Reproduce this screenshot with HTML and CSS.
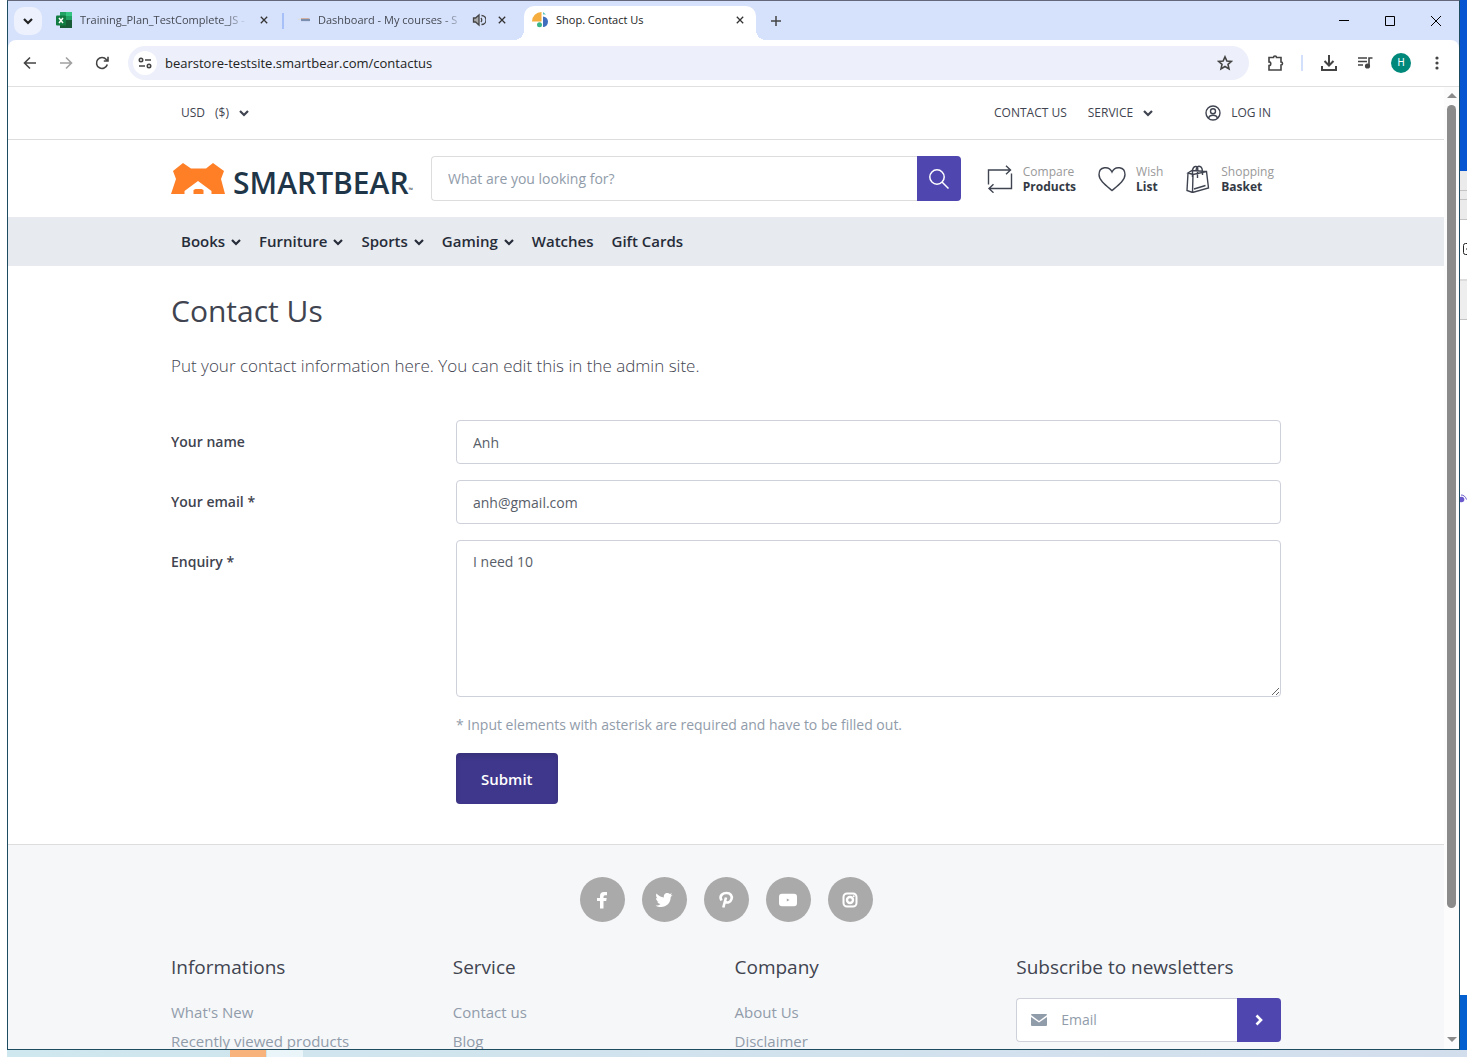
FILE: index.html
```html
<!DOCTYPE html>
<html lang="en">
<head>
<meta charset="utf-8">
<meta name="viewport" content="width=device-width, initial-scale=1">
<title>Shop. Contact Us</title>
<link rel="stylesheet" href="styles.css">
</head>
<body>
<svg class="sprite" aria-hidden="true">
  <symbol id="chevron" viewBox="0 0 10 10"><path d="M1 3l4 4 4-4" fill="none" stroke="currentColor" stroke-width="2.2"/></symbol>
  <symbol id="close" viewBox="0 0 10 10"><path d="M1 1l8 8M9 1l-8 8" fill="none" stroke="currentColor" stroke-width="1.6"/></symbol>
</svg>
<div class="desktop">
  <div class="window">
    <div class="tabstrip">
      <button class="tab-search" aria-label="Search tabs"><svg width="10" height="10"><use href="#chevron"/></svg></button>
      <div class="tab tab-first">
        <svg width="16" height="16" viewBox="0 0 16 16"><path d="M4 0h12v16H4z" fill="#21a366"/><path d="M4 8h12v8H4z" fill="#185c37"/><path d="M4 4h6v8H4z" fill="#107c41"/><path d="M10 0h6v4h-6z" fill="#33c481"/><rect y="3.500" width="10" height="10" rx="1" fill="#107c41"/><path d="M3 6l4 5M7 6l-4 5" stroke="#fff" stroke-width="1.500"/></svg>
        <span class="tab-title fade">Training_Plan_TestComplete_JS -</span>
        <button class="tab-close" aria-label="Close tab"><svg width="8" height="8"><use href="#close"/></svg></button>
      </div>
      <span class="tab-divider"></span>
      <div class="tab tab-second">
        <svg width="12" height="12" viewBox="0 0 16 16"><path d="M0 7h4" stroke="#ddd" stroke-width="2"/><path d="M4 6h11" stroke="#e3a481"/><path d="M4 8h12" stroke="#7a8fb0" stroke-width="3"/></svg>
        <span class="tab-title fade">Dashboard - My courses - S</span>
        <svg class="speaker" width="14" height="14" viewBox="0 0 14 14" fill="none" stroke="#444" stroke-width="1.300"><path d="M1.500 5h2L7 2v10L3.500 9h-2z" fill="#aaa"/><path d="M9 5q1.500 2 0 4M9.500 2.500a4.500 4.500 0 0 1 0 9"/></svg>
        <button class="tab-close" aria-label="Close tab"><svg width="8" height="8"><use href="#close"/></svg></button>
      </div>
      <div class="tab tab-active">
        <svg width="16" height="16" viewBox="0 0 16 16"><path d="M0 9.500A9.500 9.500 0 0 1 9.500 0v9.500z" fill="#f5ae3d"/><path d="M11 0l3 2.500h-3z" fill="#57c6c0"/><path d="M11 4.500a5 5.300 0 0 1 0 10.600z" fill="#3f6fbd"/><circle cx="7.500" cy="12.800" r="2.500" fill="#3ab585"/></svg>
        <span class="tab-title">Shop. Contact Us</span>
        <button class="tab-close" aria-label="Close tab"><svg width="8" height="8"><use href="#close"/></svg></button>
      </div>
      <button class="new-tab" aria-label="New tab"><svg width="10" height="10" viewBox="0 0 10 10"><path d="M5 0v10M0 5h10" stroke="#444" stroke-width="1.500"/></svg></button>
      <div class="window-controls">
        <button aria-label="Minimize"><svg width="10" height="10" viewBox="0 0 10 10"><path d="M0 4.500h10" stroke="#000"/></svg></button>
        <button aria-label="Maximize"><svg width="10" height="10" viewBox="0 0 10 10"><path d="M.5.5h9v9h-9z" fill="none" stroke="#000"/></svg></button>
        <button aria-label="Close"><svg width="10" height="10" viewBox="0 0 10 10"><path d="M0 0l10 10M10 0L0 10" stroke="#000"/></svg></button>
      </div>
    </div>

    <div class="toolbar">
      <button class="tool" aria-label="Back"><svg width="14" height="14" viewBox="0 0 14 14"><path d="M13 7H2M7 1.500L1.500 7 7 12.500"/></svg></button>
      <button class="tool muted" aria-label="Forward"><svg width="14" height="14" viewBox="0 0 14 14"><path d="M1 7h11M7 1.500L12.500 7 7 12.500"/></svg></button>
      <button class="tool" aria-label="Reload"><svg width="14" height="14" viewBox="0 0 14 14"><path d="M12.300 8.500A5.500 5.500 0 1 1 11.300 3.500L13 5M13 .8V5H8.800"/></svg></button>
      <div class="omnibox">
        <button class="site-info" aria-label="Site information"><svg width="14" height="14" viewBox="0 0 14 14"><circle cx="3" cy="4" r="1.700"/><path d="M7 4h6M1 10h6"/><circle cx="11" cy="10" r="1.700"/></svg></button>
        <input class="url" type="text" aria-label="Address" value="bearstore-testsite.smartbear.com/contactus">
        <button class="tool" aria-label="Bookmark"><svg width="16" height="16" viewBox="0 0 16 16"><path d="M8 1.800l1.900 4.200 4.500.4-3.400 3 1 4.500L8 11.500l-4 2.400 1-4.500-3.400-3L6.100 6z"/></svg></button>
      </div>
      <button class="tool extensions" aria-label="Extensions"><svg width="18" height="18" viewBox="0 0 18 18"><path d="M3 3.500h4.500a1.500 1.500 0 0 1 3 0H15V8a1.500 1.500 0 0 1 0 3v5H3v-4.500a1.800 1.800 0 0 0 0-3.600z"/></svg></button>
      <span class="tool-divider"></span>
      <button class="tool" aria-label="Downloads"><svg class="download" width="18" height="18" viewBox="0 0 18 18"><path d="M9 1v10M4.500 7L9 11.500 13.500 7M2 12v4h14v-4"/></svg></button>
      <button class="tool" aria-label="Media"><svg width="16" height="16" viewBox="0 0 16 16"><path d="M1 3h9M1 6.500h9M1 10h5M12 11V3h3.500"/><circle cx="10.500" cy="11" r="1.800" fill="#444"/></svg></button>
      <button class="tool" aria-label="Profile"><span class="avatar">H</span></button>
      <button class="tool" aria-label="Menu"><svg width="16" height="16" viewBox="0 0 16 16"><g fill="#444" stroke="none"><circle cx="8" cy="3" r="1.600"/><circle cx="8" cy="8" r="1.600"/><circle cx="8" cy="13" r="1.600"/></g></svg></button>
    </div>

    <div class="viewport">
      <div class="page">
        <div class="topbar">
          <div class="container topbar-row">
            <button class="link-button"><span>USD</span><span>($)</span><svg width="10" height="10"><use href="#chevron"/></svg></button>
            <div class="topbar-links">
              <a href="#contact">CONTACT US</a>
              <button class="link-button">SERVICE<svg width="10" height="10"><use href="#chevron"/></svg></button>
              <a class="login" href="#login"><svg width="16" height="16" viewBox="0 0 16 16" fill="none" stroke="currentColor" stroke-width="1.400"><circle cx="8" cy="8" r="7"/><circle cx="8" cy="6.300" r="2.500"/><path d="M3.500 13q1-2.700 4.500-2.700t4.500 2.700"/></svg>LOG IN</a>
            </div>
          </div>
        </div>

        <header class="container masthead">
          <a class="logo" href="#home" aria-label="SmartBear">
            <svg width="54" height="31" viewBox="0 0 54 31"><path d="M0 31l5-15L2 8 12 0l8 5.500h15L42 0l11 8-3 8 4 15H40.500V28L27 18 13.500 28v3z" fill="#ff7f27"/><path d="M22.500 31v-4l2-1h6l2 1v4z" fill="#ff7f27"/></svg>
            <span class="logo-name">SMARTBEAR</span><small class="tm">™</small>
          </a>
          <form class="search">
            <input type="search" aria-label="Search" placeholder="What are you looking for?">
            <button type="button" aria-label="Search"><svg width="20" height="20" viewBox="0 0 20 20" fill="none" stroke="#fff" stroke-width="1.500"><circle cx="8" cy="8" r="7.200"/><path d="M13 13l6.500 6.500"/></svg></button>
          </form>
          <nav class="shop-tools" aria-label="Shop tools">
            <a href="#compare"><svg width="26" height="28" viewBox="0 0 26 28"><path d="M1.500 19.500V5H24M19 .8L23.500 5 19 9.200M24.500 8.500V23.500H2M6.500 19.200L2 23.500l4.500 4.200"/></svg><span>Compare<b>Products</b></span></a>
            <a href="#wishlist"><svg width="28" height="28" viewBox="0 0 28 28"><path d="M14 25.500C8 20.500 1 15.500 1 9.500 1 1.500 11 .5 14 7c3-6.500 13-5.500 13 2.500 0 6-7 11-13 16z"/></svg><span>Wish<b>List</b></span></a>
            <a href="#basket"><svg width="26" height="28" viewBox="0 0 26 28"><path d="M3 8l-1 17.500 5.500 2L23.500 23 21.500 6.500 8 9.500 3 8 7 5.500l14.500 1M8 9.500L7.500 27.500M9 24l11.500-3.500M7.500 12V5q1-4 3.500-3.500T12.500 6v7M11 5q1-4.500 4-3.500T17.500 10"/></svg><span>Shopping<b>Basket</b></span></a>
          </nav>
        </header>

        <div class="menubar">
          <nav class="container menu" aria-label="Categories">
            <a href="#books">Books<svg width="10" height="10"><use href="#chevron"/></svg></a>
            <a href="#furniture">Furniture<svg width="10" height="10"><use href="#chevron"/></svg></a>
            <a href="#sports">Sports<svg width="10" height="10"><use href="#chevron"/></svg></a>
            <a href="#gaming">Gaming<svg width="10" height="10"><use href="#chevron"/></svg></a>
            <a href="#watches">Watches</a>
            <a href="#giftcards">Gift Cards</a>
          </nav>
        </div>

        <main class="container content">
          <h1>Contact Us</h1>
          <p class="lead">Put your contact information here. You can edit this in the admin site.</p>
          <form class="contact-form">
            <label for="name">Your name</label>
            <input id="name" type="text" value="Anh">
            <label for="email">Your email *</label>
            <input id="email" type="email" value="anh@gmail.com">
            <label for="enquiry">Enquiry *</label>
            <textarea id="enquiry">I need 10</textarea>
            <div class="form-end">
              <p>* Input elements with asterisk are required and have to be filled out.</p>
              <button type="button" class="submit">Submit</button>
            </div>
          </form>
        </main>

        <footer class="footer">
          <div class="container">
            <div class="social">
              <a href="#facebook" aria-label="Facebook"><svg width="18" height="18" viewBox="0 0 18 18"><path d="M7 17.500V10H4V7h3V5q0-4 4-4h3v3.200h-2q-1.500 0-1.500 1.500V7h3.200l-.5 3h-2.700v7.500z"/></svg></a>
              <a href="#twitter" aria-label="Twitter"><svg width="18" height="18" viewBox="0 0 18 18"><path d="M17.500 4.200l-1.800 1.900C15.800 12 11.500 16 6 16c-2 0-4-.5-5.500-1.500 2 .1 3.700-.4 5-1.500-1.600-.1-2.800-1-3.300-2.400h1.500C2 10 1 8.600 1 7l1.500.4C1 6.200.6 4.200 1.500 2.600c2 2.300 4.500 3.600 7.400 3.800C8.400 4 10 2 12.300 2q1.500 0 2.600 1.100L17 2.300l-1.300 2z"/></svg></a>
              <a href="#pinterest" aria-label="Pinterest"><svg width="18" height="18" viewBox="0 0 18 18"><path d="M6.300 16.500l2.700-10M4.500 9.500C1.500 4 6.500 2 9.500 2c4 0 6 3 5 6-1.200 4-5.500 4.500-6.500 2" fill="none" stroke="#fff" stroke-width="2.600"/></svg></a>
              <a href="#youtube" aria-label="YouTube"><svg width="18" height="18" viewBox="0 0 18 18"><path fill-rule="evenodd" d="M3 2.700h12q3 0 3 3v6.600q0 3-3 3H3q-3 0-3-3V5.700q0-3 3-3zM7.800 7.400v3.200L10.500 9z"/></svg></a>
              <a href="#instagram" aria-label="Instagram"><svg width="18" height="18" viewBox="0 0 18 18"><rect x="2.500" y="2.500" width="13" height="13" rx="3.500" stroke="#fff" stroke-width="2" fill="none"/><circle cx="9" cy="9" r="3" stroke="#fff" stroke-width="2.400" fill="none"/><circle cx="12.700" cy="5.300" r="1"/></svg></a>
            </div>
            <div class="footer-columns">
              <section><h2>Informations</h2><ul><li><a href="#new">What's New</a></li><li><a href="#recent">Recently viewed products</a></li></ul></section>
              <section><h2>Service</h2><ul><li><a href="#contact">Contact us</a></li><li><a href="#blog">Blog</a></li></ul></section>
              <section><h2>Company</h2><ul><li><a href="#about">About Us</a></li><li><a href="#disclaimer">Disclaimer</a></li></ul></section>
              <section>
                <h2>Subscribe to newsletters</h2>
                <form class="newsletter">
                  <svg width="16" height="12" viewBox="0 0 16 12" fill="#919caa"><path d="M0 1q0-1 1-1h14q1 0 1 1L8 7z"/><path d="M0 3l8 5.500L16 3v8q0 1-1 1H1q-1 0-1-1z"/></svg>
                  <input type="email" aria-label="Newsletter email" placeholder="Email">
                  <button type="button" aria-label="Subscribe"><svg width="10" height="12" viewBox="0 0 10 12"><path d="M2.500 1.500L7 6l-4.500 4.500" fill="none" stroke="#fff" stroke-width="2.600"/></svg></button>
                </form>
              </section>
            </div>
          </div>
        </footer>
      </div>
      <div class="scrollbar">
        <span class="arrow-up"></span>
        <span class="thumb"></span>
        <span class="arrow-down"></span>
      </div>
    </div>
  </div>

  <div class="behind">
    <span class="wallpaper-top"></span>
    <span class="bar bar-narrow"></span>
    <span class="bar bar-thin"></span>
    <span class="bar bar-wide"></span>
    <span class="panel"><svg width="7" height="12" viewBox="0 0 7 12" fill="none" stroke="#222"><path d="M7 .5H5.500q-2 0-2 2v7q0 2 2 2H7M6 6h1"/></svg></span>
    <span class="bar bar-header"></span>
    <span class="sheet"><svg width="7" height="10" viewBox="0 0 7 10"><circle cx="1.500" cy="5.500" r="2.800" fill="#6a5acd"/><path d="M1 1q4 0 5.500 4.500" fill="none" stroke="#6a5acd"/></svg></span>
    <span class="wallpaper-bottom"></span>
  </div>
  <div class="taskbar"><span class="task task-active"></span><span class="task"></span></div>
</div>
</body>
</html>
```
FILE: styles.css
```css
* { box-sizing: border-box; }
body {
  margin: 0;
  background: #fff;
  color: #3f4450;
  font: 14px/20px "Open Sans", "Noto Sans", sans-serif;
}
button, input, textarea { font: inherit; color: inherit; margin: 0; }
button { padding: 0; border: 0; background: none; }
a { color: inherit; text-decoration: none; }
svg { display: block; flex: none; }
.sprite { display: none; }

/* Desktop */
.desktop {
  display: grid;
  grid-template: minmax(0, 1fr) 7px / minmax(0, 1fr) 7px;
  height: 100vh;
  padding-left: 7px;
  overflow: hidden;
}
.window {
  display: flex;
  flex-direction: column;
  min-height: 0;
  border: 1px solid #1d4b60;
  border-top-color: #64677a;
  background: #d6e1fb;
}
.behind { display: flex; flex-direction: column; overflow: hidden; }
.wallpaper-top { height: 171px; background: #0755d0; }
.bar { border-bottom: 1px solid #c4c4c4; background: #ebebeb; }
.bar-narrow { height: 20px; }
.bar-thin { height: 9px; }
.bar-wide { height: 20px; }
.panel { height: 59px; padding-top: 23px; background: #fff; }
.bar-header { height: 41px; border-top: 2px solid #ddd; background: #eee; }
.sheet { flex: 1; padding-top: 174px; background: #fff; }
.wallpaper-bottom { height: 55px; background: #0560cf; }
.taskbar {
  grid-column: 1 / -1;
  display: flex;
  gap: 1px;
  padding-left: 223px;
  background: linear-gradient(90deg, #cfe7ef, #d3deec);
}
.task { width: 36px; background: #eaf5fa; }
.task-active { background: #f8b27c; }

/* Tab strip */
.tabstrip {
  display: flex;
  align-items: center;
  height: 39px;
  padding-left: 6px;
  font-size: 11px;
  line-height: 16px;
  color: #454a54;
}
.tab-search {
  display: grid;
  place-items: center;
  width: 28px;
  height: 28px;
  border-radius: 10px;
  background: #ecf1fd;
  color: #222;
}
.tab { display: flex; align-items: center; gap: 8px; height: 34px; padding: 0 14px 2px; }
.tab-first { width: 240px; padding-right: 10px; }
.tab-second { width: 240px; }
.tab-title { flex: 1; overflow: hidden; white-space: nowrap; }
.fade { mask-image: linear-gradient(90deg, #000 85%, transparent); }
.tab-close { display: grid; place-items: center; width: 16px; height: 16px; color: #333; }
.tab-divider { width: 2px; height: 16px; background: #a8c0f8; }
.tab-active {
  position: relative;
  align-self: flex-end;
  width: 232px;
  padding: 0 8px 6px;
  border-radius: 10px 10px 0 0;
  background: #fff;
  color: #222;
}
.tab-active::before, .tab-active::after {
  content: "";
  position: absolute;
  bottom: 0;
  width: 10px;
  height: 10px;
}
.tab-active::before { right: 100%; background: radial-gradient(circle at 0 0, transparent 10px, #fff 10px); }
.tab-active::after { left: 100%; background: radial-gradient(circle at 100% 0, transparent 10px, #fff 10px); }
.new-tab { display: grid; place-items: center; width: 28px; height: 28px; margin-left: 6px; }
.window-controls { display: flex; margin-left: auto; }
.window-controls button { display: grid; place-items: center; width: 46px; height: 38px; }

/* Toolbar */
.toolbar {
  display: flex;
  align-items: center;
  gap: 4px;
  height: 47px;
  padding: 0 6px;
  border-bottom: 1px solid #dfe0e2;
  border-radius: 8px 8px 0 0;
  background: #fff;
}
.tool { display: grid; place-items: center; flex: none; width: 32px; height: 32px; }
.tool svg, .site-info svg { fill: none; stroke: #444; stroke-width: 1.6; }
.tool .download { stroke-width: 2; }
.muted { opacity: .5; }
.omnibox {
  display: flex;
  flex: 1;
  align-items: center;
  gap: 8px;
  height: 34px;
  margin: 0 6px;
  padding: 0 8px 0 5px;
  border-radius: 17px;
  background: #edf0fa;
}
.site-info { display: grid; place-items: center; width: 24px; height: 24px; border-radius: 50%; background: #fff; }
.url { flex: 1; min-width: 0; padding: 0; border: 0; background: none; color: #222; font-size: 13px; }
.tool-divider { width: 2px; height: 16px; margin: 0 6px; background: #d3e0fb; }
.avatar {
  display: grid;
  place-items: center;
  width: 20px;
  height: 20px;
  border-radius: 50%;
  background: #00897b;
  color: #fff;
  font: 10px/20px Roboto, sans-serif;
}

/* Viewport */
.viewport { display: flex; flex: 1; min-height: 0; background: #fff; }
.page { flex: 1; min-width: 0; overflow: hidden; }
.scrollbar {
  display: flex;
  flex-direction: column;
  align-items: center;
  width: 15px;
  padding: 6px 0 7px;
  background: #fcfcfc;
}
.thumb { flex: 1; width: 9px; margin: 7px 0 129px; border-radius: 5px; background: #8b8b8b; }
.arrow-up, .arrow-down { border: 5px solid transparent; border-top-width: 0; border-bottom: 5px solid #8b8b8b; }
.arrow-down { border-top: 5px solid #8b8b8b; border-bottom-width: 0; }
.container { max-width: 1110px; margin: 0 auto; }

/* Top bar */
.topbar { border-bottom: 1px solid #ddd; font-size: 12px; }
.topbar-row { display: flex; align-items: center; justify-content: space-between; height: 52px; padding: 0 10px; }
.topbar-links { display: flex; align-items: center; gap: 21px; }
.link-button, .login { display: flex; align-items: center; gap: 10px; }
.login { margin-left: 31px; }

/* Masthead */
.masthead { display: flex; align-items: center; height: 77px; }
.logo { display: flex; align-items: flex-end; flex: none; width: 260px; color: #1e3648; }
.logo-name { margin-left: 8px; font: 600 30px/23px "Open Sans", sans-serif; }
.tm { font-size: 6px; line-height: 8px; }
.search { display: flex; flex: 1; height: 45px; }
.search input {
  flex: 1;
  min-width: 0;
  padding: 0 16px;
  border: 1px solid #ddd;
  border-right: 0;
  border-radius: 4px 0 0 4px;
  outline: 0;
}
::placeholder { color: #919caa; opacity: 1; }
.search button, .newsletter button {
  display: grid;
  place-items: center;
  width: 44px;
  border-radius: 0 4px 4px 0;
  background: #4f46b0;
}
.shop-tools { display: flex; gap: 22px; padding: 0 7px 0 26px; font-size: 12px; line-height: 15px; color: #999; }
.shop-tools a { display: flex; align-items: center; gap: 10px; }
.shop-tools svg { fill: none; stroke: #3f4450; stroke-width: 1.4; }
.shop-tools b { display: block; color: #343a45; }

/* Menu */
.menubar { background: #e7eaee; }
.menu { display: flex; gap: 18px; padding: 0 10px; font-size: 15px; font-weight: 600; line-height: 49px; color: #262c39; }
.menu a { display: flex; align-items: center; gap: 6px; }

/* Contact form */
.content { padding: 24px 0 40px; }
h1 { margin: 0; font-size: 30px; font-weight: 400; line-height: 42px; }
.lead { margin: 20px 0 40px; font-size: 17px; font-weight: 300; line-height: 28px; }
.contact-form { display: grid; grid-template-columns: 1fr 3fr; gap: 16px 10px; }
.contact-form label { padding-top: 12px; font-weight: 600; }
.contact-form input, .contact-form textarea {
  width: 100%;
  padding: 11px 16px;
  border: 1px solid #ced0da;
  border-radius: 4px;
  background: #fff;
  color: #585e69;
}
.contact-form input { height: 44px; }
.contact-form textarea { display: block; height: 157px; resize: vertical; }
.form-end { grid-column: 2; color: #919caa; }
.form-end p { margin: 2px 0 18px; }
.submit {
  height: 51px;
  padding: 0 25px;
  border-radius: 4px;
  background: #3f378b;
  box-shadow: inset 0 3px 5px #00000020;
  color: #fff;
  font-size: 15px;
  font-weight: 600;
}

/* Footer */
.footer { padding-top: 32px; border-top: 1px solid #ddd; background: #f6f7f9; }
.social { display: flex; justify-content: center; gap: 17px; }
.social a { display: grid; place-items: center; width: 45px; height: 45px; border-radius: 50%; background: #aaa; }
.social svg { fill: #fff; }
.footer-columns { display: grid; grid-template-columns: repeat(4, minmax(0, 1fr)); gap: 17px; padding: 31px 0 40px; }
h2 { margin: 0 0 17px; font-size: 19px; font-weight: 400; line-height: 28px; white-space: nowrap; }
ul { margin: 0; padding: 0; list-style: none; color: #919caa; line-height: 29px; font-size: 15px; }
.newsletter { display: flex; align-items: center; height: 44px; border: 1px solid #ced0da; border-right: 0; border-radius: 4px; background: #fff; padding-left: 14px; }
.newsletter input { flex: 1; min-width: 0; padding: 0 14px; border: 0; outline: 0; background: none; }
.newsletter button { height: 44px; }
```
